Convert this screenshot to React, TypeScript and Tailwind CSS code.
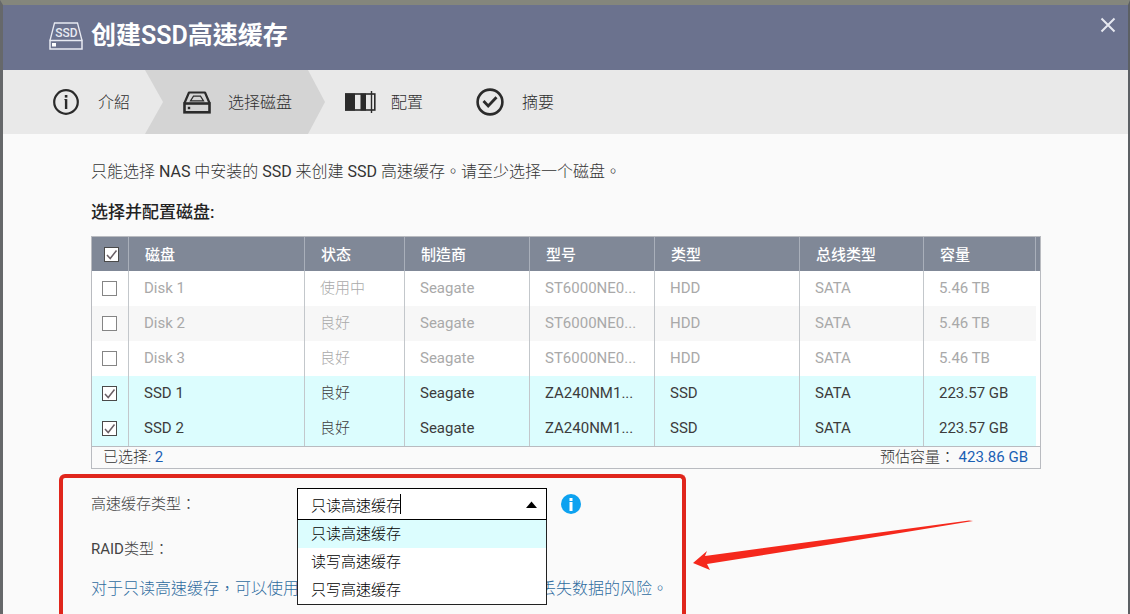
import { useState } from "react";
import clsx from "clsx";

type Disk = {
  name: string;
  status: string;
  vendor: string;
  model: string;
  type: string;
  bus: string;
  capacity: string;
};

const DISKS: Disk[] = [
  { name: "Disk 1", status: "使用中", vendor: "Seagate", model: "ST6000NE0...", type: "HDD", bus: "SATA", capacity: "5.46 TB" },
  { name: "Disk 2", status: "良好", vendor: "Seagate", model: "ST6000NE0...", type: "HDD", bus: "SATA", capacity: "5.46 TB" },
  { name: "Disk 3", status: "良好", vendor: "Seagate", model: "ST6000NE0...", type: "HDD", bus: "SATA", capacity: "5.46 TB" },
  { name: "SSD 1", status: "良好", vendor: "Seagate", model: "ZA240NM1...", type: "SSD", bus: "SATA", capacity: "223.57 GB" },
  { name: "SSD 2", status: "良好", vendor: "Seagate", model: "ZA240NM1...", type: "SSD", bus: "SATA", capacity: "223.57 GB" },
];

const HEADERS = ["磁盘", "状态", "制造商", "型号", "类型", "总线类型", "容量"];

const CACHE_TYPES = ["只读高速缓存", "读写高速缓存", "只写高速缓存"];

const SsdLogo = () => (
  <svg width="34" height="28" viewBox="0 0 34 28" fill="none" stroke="#e8eaf2" aria-hidden="true">
    <path d="M1 18.5 L5.5 1 H28.5 L33 18.5" strokeWidth="1.3" />
    <rect x="1" y="18.5" width="32" height="8.5" strokeWidth="1.5" />
    <rect x="3" y="21" width="4" height="3.5" fill="#fff" stroke="none" />
    <text x="17.5" y="14.5" textAnchor="middle" fontSize="12" fontWeight="500" fill="#e8eaf2" stroke="none">
      SSD
    </text>
  </svg>
);

const InfoIcon = () => (
  <svg width="28" height="28" viewBox="0 0 28 28" fill="none" stroke="#2b2b2b" aria-hidden="true">
    <circle cx="14" cy="14" r="11.8" strokeWidth="2.2" />
    <rect x="12.8" y="7" width="2.6" height="2.6" fill="#2b2b2b" stroke="none" />
    <path d="M12.4 11.6 H14" strokeWidth="1" />
    <path d="M14.1 11.1 V21" strokeWidth="2.4" />
  </svg>
);

const DiskIcon = () => (
  <svg width="28" height="23" viewBox="0 0 28 23" fill="none" stroke="#2b2b2b" aria-hidden="true">
    <path d="M1.5 12 L6 1.5 H22 L26.5 12" strokeWidth="2.2" strokeLinejoin="round" />
    <rect x="1.5" y="12.5" width="25" height="8.8" strokeWidth="2.6" />
    <path d="M10.5 5.2 H17.5 L20.5 9.8 H7.5 Z" strokeWidth="1.2" />
    <rect x="4.8" y="15.8" width="2.4" height="2.4" fill="#2b2b2b" stroke="none" />
  </svg>
);

const ConfigIcon = () => (
  <svg width="31" height="22" viewBox="0 0 31 22" fill="none" stroke="#2b2b2b" aria-hidden="true">
    <rect x="0.8" y="3" width="29" height="16" strokeWidth="1.6" />
    <path d="M0 2.5 H10 V19.5 H0 Z M15.5 2.5 H21 V19.5 H15.5 Z" fill="#2b2b2b" stroke="none" />
    <path d="M26.5 0 V22" strokeWidth="1.4" />
  </svg>
);

const SummaryIcon = () => (
  <svg width="28" height="28" viewBox="0 0 28 28" fill="none" stroke="#2b2b2b" aria-hidden="true">
    <circle cx="14" cy="14" r="12.4" strokeWidth="2.6" />
    <path d="M7.5 13 L12.2 18 L20.5 9.2" strokeWidth="2.8" />
  </svg>
);

type CheckboxProps = {
  label: string;
  checked: boolean;
  disabled?: boolean;
  onChange: () => void;
};

const Checkbox = ({ label, checked, disabled, onChange }: CheckboxProps) => (
  <label className="relative block size-[15px]">
    <input
      type="checkbox"
      aria-label={label}
      checked={checked}
      disabled={disabled}
      onChange={onChange}
      className={clsx(
        "block size-[15px] appearance-none border bg-white",
        checked ? "border-[#4a4a4a]" : "border-[#858585]",
      )}
    />
    {checked && (
      <svg className="pointer-events-none absolute inset-0" width="15" height="15" fill="none" stroke="#6a6066" aria-hidden="true">
        <path d="M3 8 L6.2 11.5 L12.5 3.5" strokeWidth="1.5" />
      </svg>
    )}
  </label>
);

const Steps = () => (
  <nav className="h-16 bg-[#e9e9e9] text-base font-light text-[#2e2e2e]">
    <ol className="flex h-full">
      <li className="w-[142px] pl-[49px]">
        <button className="flex h-full items-center gap-[18px]">
          <InfoIcon />
          <span className="pt-[2px]">介紹</span>
        </button>
      </li>
      <li className="w-[180px] bg-[#d4d4d4] pl-[38px] [clip-path:polygon(0_0,163px_0,100%_50%,163px_100%,0_100%,18px_50%)]">
        <button className="flex h-full items-center gap-[17px]" aria-current="step">
          <DiskIcon />
          <span className="pt-[2px]">选择磁盘</span>
        </button>
      </li>
      <li className="pl-5">
        <button className="flex h-full items-center gap-[15px]">
          <ConfigIcon />
          <span className="pt-[2px]">配置</span>
        </button>
      </li>
      <li className="pl-[53px]">
        <button className="flex h-full items-center gap-[18px]">
          <SummaryIcon />
          <span className="pt-[2px]">摘要</span>
        </button>
      </li>
    </ol>
  </nav>
);

const DiskTable = () => {
  const [selected, setSelected] = useState(["SSD 1", "SSD 2"]);

  const toggle = (name: string) =>
    setSelected(selected.includes(name) ? selected.filter((n) => n !== name) : [...selected, name]);

  const toggleAll = () => setSelected(selected.length ? [] : ["SSD 1", "SSD 2"]);

  return (
    <div className="-mr-px border border-[#b9bbc0]">
      <table className="w-full table-fixed border-separate border-spacing-0 text-left text-[15px]">
        <colgroup>
          <col className="w-[37px]" />
          <col className="w-[176px]" />
          <col className="w-[100px]" />
          <col className="w-[125px]" />
          <col className="w-[125px]" />
          <col className="w-[145px]" />
          <col className="w-[124px]" />
          <col />
          <col className="w-1" />
        </colgroup>
        <thead>
          <tr className="h-[34px] bg-[#808897] text-white">
            <th className="border-r border-[#a9afba] pl-3">
              <Checkbox label="全选" checked={selected.length > 0} onChange={toggleAll} />
            </th>
            {HEADERS.map((header) => (
              <th key={header} scope="col" className="border-r border-[#a9afba] pt-[2px] pl-4 font-medium">
                {header}
              </th>
            ))}
            <td />
          </tr>
        </thead>
        <tbody>
          {DISKS.map((disk, i) => {
            const isSsd = disk.type === "SSD";
            const { name, ...rest } = disk;
            return (
              <tr
                key={name}
                className={clsx(
                  "h-[35px]",
                  isSsd ? "text-[#3c3c3c]" : "text-[#a9a9a9]",
                  selected.includes(name) ? "bg-[#dcfdfe]" : i % 2 ? "bg-[#f7f7f7]" : "bg-white",
                )}
              >
                <td className="border-r border-[#c3c7cb] pl-[10px]">
                  <Checkbox
                    label={name}
                    checked={selected.includes(name)}
                    disabled={!isSsd}
                    onChange={() => toggle(name)}
                  />
                </td>
                {[name, ...Object.values(rest)].map((value, col) => (
                  <td
                    key={col}
                    className={clsx(
                      "truncate pl-[15px]",
                      col < 6 && "border-r border-[#c3c7cb]",
                      col === 1 && "font-light",
                    )}
                  >
                    {value}
                  </td>
                ))}
                <td className="bg-white" />
              </tr>
            );
          })}
        </tbody>
      </table>
      <div className="flex h-[22px] items-center justify-between border-t border-[#b9bbc0] pr-3 pl-[11px] text-[15px] font-light text-[#333]">
        <span>
          已选择: <span className="font-normal text-[#1a5fb4]">{selected.length}</span>
        </span>
        <span>
          预估容量： <span className="font-normal text-[#1a5fb4]">423.86 GB</span>
        </span>
      </div>
    </div>
  );
};

const CacheTypeSelect = () => {
  const [value, setValue] = useState(CACHE_TYPES[0]);

  return (
    <div className="relative w-[250px] text-[15px] font-light text-black">
      <div className="relative">
        <input
          id="cache-type"
          role="combobox"
          aria-expanded="true"
          aria-controls="cache-type-list"
          value={value}
          onChange={(e) => setValue(e.target.value)}
          className="block h-8 w-full border border-black bg-white px-[13px] outline-none"
        />
        <span className="absolute top-[6px] left-[103px] h-5 w-px bg-black" />
        <svg className="absolute top-[13px] right-[10px]" width="11" height="7" aria-hidden="true">
          <path d="M0 7 L5.5 0.5 L11 7 Z" fill="#000" />
        </svg>
      </div>
      <ul
        id="cache-type-list"
        role="listbox"
        className="absolute top-8 right-0 left-0 z-10 border border-t-0 border-[#222] bg-white"
      >
        {CACHE_TYPES.map((type) => (
          <li key={type} role="option" aria-selected={type === value}>
            <button
              className={clsx("block h-7 w-full px-[13px] text-left", type === value && "bg-[#dcfdfe]")}
              onClick={() => setValue(type)}
            >
              {type}
            </button>
          </li>
        ))}
      </ul>
    </div>
  );
};

const CacheForm = () => (
  <section className="relative mt-[5px] -ml-8 w-[627px] flex-1 rounded-t-md border-4 border-b-0 border-[#e0261c] pt-[10px] pr-[14px] pl-7 text-[15px] font-light text-[#444]">
    <div className="flex items-center">
      <label htmlFor="cache-type" className="w-[206px]">
        高速缓存类型：
      </label>
      <CacheTypeSelect />
      <button className="ml-[14px] grid size-5 place-items-center rounded-full bg-[#0da2f0]" aria-label="说明">
        <svg width="6" height="13" fill="#fff" aria-hidden="true">
          <rect x="1.5" y="0" width="3" height="3" />
          <rect x="1.5" y="4" width="3" height="9" />
        </svg>
      </button>
    </div>
    <p className="mt-[17px] leading-6">
      <span className="font-normal">RAID</span>类型：
    </p>
    <p className="mt-4 flex justify-between text-base whitespace-nowrap text-[#2f6c9f]">
      <span>对于只读高速缓存，可以使用</span>
      <span>丢失数据的风险。</span>
    </p>
    <svg className="absolute top-[41px] left-[630px]" width="282" height="56" fill="#f5281c" aria-hidden="true">
      <path d="M280 2 L276 1.5 L12 37 L14 32 L0 44 L17 51 L14 45 L140 25 Z" />
    </svg>
  </section>
);

export default function App() {
  return (
    <div className="flex h-screen flex-col overflow-hidden border-t-[5px] border-r-2 border-l-[3px] border-t-[#84867c] border-r-[#5c6064] border-l-[#66686a] font-[Roboto,'Noto_Sans_CJK_TC',sans-serif]">
      <div className="flex flex-1 flex-col bg-[#fafafa]">
        <header className="flex h-[65px] shrink-0 items-start justify-between bg-[#6b728e] pr-3 pl-[46px] text-white">
          <h1 className="flex h-[61px] items-center gap-2 text-[25px] font-semibold">
            <SsdLogo />
            创建SSD高速缓存
          </h1>
          <button className="mt-3" aria-label="关闭">
            <svg width="16" height="16" stroke="#e6e8f0" strokeWidth="2" aria-hidden="true">
              <path d="M1.5 1.5 L14.5 14.5 M14.5 1.5 L1.5 14.5" />
            </svg>
          </button>
        </header>
        <Steps />
        <main className="flex flex-1 flex-col px-[88px] pt-[26px]">
          <p className="text-base font-light text-[#333]">
            只能选择 <span className="font-normal">NAS</span> 中安装的 <span className="font-normal">SSD</span> 来创建{" "}
            <span className="font-normal">SSD</span> 高速缓存。请至少选择一个磁盘。
          </p>
          <h2 className="mt-4 mb-3 text-[17px] leading-6 font-medium text-[#222]">选择并配置磁盘:</h2>
          <DiskTable />
          <CacheForm />
        </main>
      </div>
    </div>
  );
}
